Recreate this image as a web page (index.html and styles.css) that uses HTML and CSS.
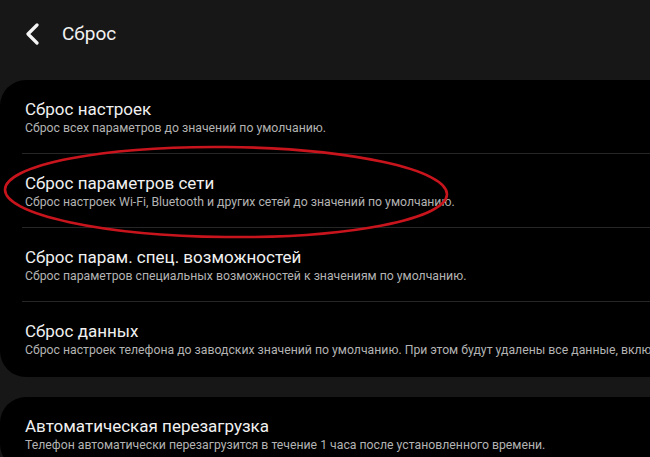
FILE: index.html
```html
<!DOCTYPE html>
<html lang="ru">
<head>
<meta charset="utf-8">
<link rel="stylesheet" href="styles.css">
</head>
<body>
<div class="screen">
  <header class="topbar">
    <svg class="back" width="18" height="22" viewBox="0 0 18 22"><path d="M13 2 L4 11 L13 20" fill="none" stroke="#f5f5f5" stroke-width="3.2" stroke-linecap="round" stroke-linejoin="round"/></svg>
    <h1 class="page-title">Сброс</h1>
  </header>
  <section class="card card-main">
    <div class="row">
      <div class="row-title">Сброс настроек</div>
      <div class="row-sub">Сброс всех параметров до значений по умолчанию.</div>
    </div>
    <div class="row">
      <div class="row-title">Сброс параметров сети</div>
      <div class="row-sub">Сброс настроек Wi-Fi, Bluetooth и других сетей до значений по умолчанию.</div>
    </div>
    <div class="row">
      <div class="row-title">Сброс парам. спец. возможностей</div>
      <div class="row-sub">Сброс параметров специальных возможностей к значениям по умолчанию.</div>
    </div>
    <div class="row">
      <div class="row-title">Сброс данных</div>
      <div class="row-sub">Сброс настроек телефона до заводских значений по умолчанию. При этом будут удалены все данные, включая файлы и загруженные приложения.</div>
    </div>
  </section>
  <section class="card">
    <div class="row">
      <div class="row-title">Автоматическая перезагрузка</div>
      <div class="row-sub">Телефон автоматически перезагрузится в течение 1 часа после установленного времени.</div>
    </div>
  </section>
  <svg class="mark" width="650" height="457" viewBox="0 0 650 457"><ellipse cx="226" cy="192" rx="221" ry="45" fill="none" stroke="#c8141c" stroke-width="2.6" transform="rotate(0.6 226 192)"/></svg>
</div>
</body>
</html>
```

FILE: styles.css
```css
html, body {
  margin: 0;
  padding: 0;
  background: #171717;
  overflow: hidden;
}
.screen {
  position: relative;
  width: 650px;
  height: 457px;
  overflow: hidden;
  font-family: Roboto, "Noto Sans", sans-serif;
}
.topbar {
  height: 80px;
  display: flex;
  align-items: flex-start;
  padding-top: 22px;
  box-sizing: border-box;
}
.back {
  margin-left: 24px;
  margin-top: 1px;
}
.page-title {
  margin: 0 0 0 20px;
  font-size: 19px;
  font-weight: 400;
  line-height: 24px;
  color: #f2f2f2;
}
.card {
  background: #000;
  border-radius: 26px 0 0 26px;
  margin-bottom: 20px;
}
.card-main {
  padding-bottom: 2px;
}
.row {
  padding: 18px 0 17px 25px;
  white-space: nowrap;
  overflow: hidden;
}
.row + .row {
  border-top: 1px solid #262626;
  margin-left: 22px;
  padding-left: 3px;
}
.row-title {
  font-size: 17px;
  line-height: 22px;
  color: #f0f0f0;
}
.row-sub {
  font-size: 12.25px;
  line-height: 16px;
  color: #b3b3b3;
}
.mark {
  position: absolute;
  left: 0;
  top: 0;
  pointer-events: none;
}
```
